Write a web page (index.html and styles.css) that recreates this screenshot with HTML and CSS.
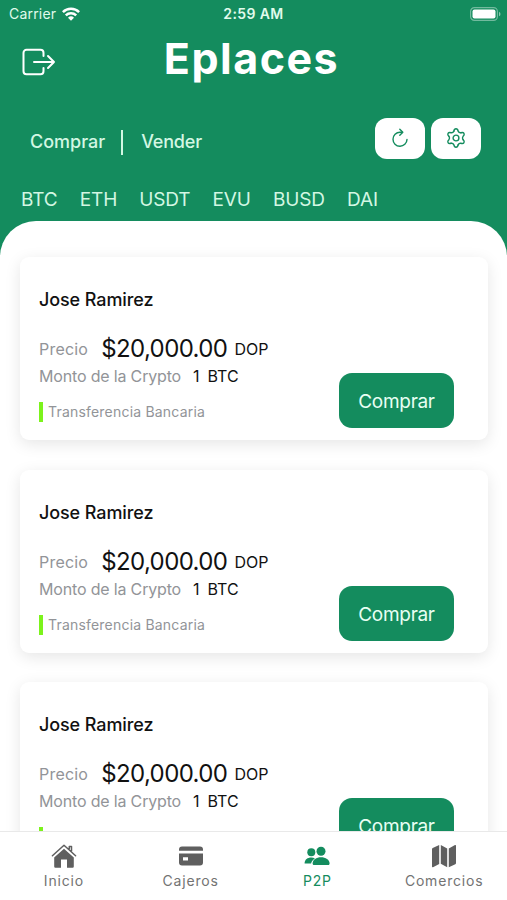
FILE: index.html
```html
<!DOCTYPE html>
<html lang="es">
<head>
  <meta charset="UTF-8" />
  <meta name="viewport" content="width=device-width, initial-scale=1.0" />
  <title>Eplaces</title>
  <link rel="stylesheet" href="styles.css">
</head>
<body>
  <div class="app">
    <!-- Status bar -->
    <div class="status-bar">
      <div class="carrier">
        <span>Carrier</span>
        <svg width="18" height="14" viewBox="0 0 18 14" fill="none" stroke="#fff" stroke-width="2.5">
          <path d="M0.9 5.2a11.5 11.5 0 0 1 16.2 0" />
          <path d="M3.8 8.3a7.4 7.4 0 0 1 10.4 0" />
          <path d="M9 13.8L6 10.8a4.3 4.3 0 0 1 6 0z" fill="#fff" stroke="none" />
        </svg>
      </div>
      <span class="time">2:59 AM</span>
      <svg class="battery" width="31" height="14" viewBox="0 0 31 14">
        <rect x="0.6" y="0.6" width="26.8" height="12.8" rx="3.8" fill="none" stroke="#fff" stroke-opacity=".4" stroke-width="1.2" />
        <rect x="2.5" y="2.4" width="23" height="9.2" rx="2" fill="#fff" />
        <path d="M29 4.7a2.5 2.5 0 0 1 0 4.6z" fill="#fff" fill-opacity=".5" />
      </svg>
    </div>

    <!-- Title -->
    <header class="header">
      <svg class="logout" width="34" height="28" viewBox="0 0 34 28" fill="none" stroke="#fff" stroke-width="2" stroke-linecap="round" stroke-linejoin="round">
        <path d="M21.500 8V4.800a3 3 0 0 0-3-3h-14a3 3 0 0 0-3 3v18.400a3 3 0 0 0 3 3h14a3 3 0 0 0 3-3V20" />
        <path d="M12 14h20M26 8l6 6-6 6" />
      </svg>
      <h1>Eplaces</h1>
    </header>

    <!-- Buy / sell switch -->
    <div class="toolbar">
      <div class="modes">
        <span class="mode-buy">Comprar</span>
        <span class="divider"></span>
        <span class="mode-sell">Vender</span>
      </div>
      <div class="actions">
        <button class="icon-button">
          <svg width="18" height="20" viewBox="0 0 18 20" fill="none" stroke="#148c5e" stroke-width="1.4" stroke-linecap="round" stroke-linejoin="round">
            <path d="M16 11.500A7 7 0 1 1 9 4.300h2.200" />
            <path d="M8.800 1.300l3 3-3 3" />
          </svg>
        </button>
        <button class="icon-button">
          <svg width="20" height="20" viewBox="0 0 20 20" fill="none" stroke="#148c5e" stroke-width="1.4" stroke-linecap="round">
            <path id="tooth" d="M7.900 3.100C8.200 1.300 8.800.8 10 .8s1.800.5 2.100 2.300q.8 1.800 2.830 1.630" />
            <use href="#tooth" transform="rotate(60 10 10)" />
            <use href="#tooth" transform="rotate(120 10 10)" />
            <use href="#tooth" transform="rotate(180 10 10)" />
            <use href="#tooth" transform="rotate(240 10 10)" />
            <use href="#tooth" transform="rotate(300 10 10)" />
            <circle cx="10" cy="10" r="2.900" />
          </svg>
        </button>
      </div>
    </div>

    <!-- Coins -->
    <nav class="coins">
      <span>BTC</span>
      <span>ETH</span>
      <span>USDT</span>
      <span>EVU</span>
      <span>BUSD</span>
      <span>DAI</span>
    </nav>

    <!-- Offers -->
    <main class="offers">
      <div class="card">
        <div class="info">
          <h2>Jose Ramirez</h2>
          <p class="price"><span class="label">Precio</span><span class="amount">$20,000.00</span><span class="currency">DOP</span></p>
          <p class="crypto"><span class="label">Monto de la Crypto</span><span class="quantity">1</span><span class="coin">BTC</span></p>
          <p class="method"><span>Transferencia Bancaria</span></p>
        </div>
        <button class="buy">Comprar</button>
      </div>
      <div class="card">
        <div class="info">
          <h2>Jose Ramirez</h2>
          <p class="price"><span class="label">Precio</span><span class="amount">$20,000.00</span><span class="currency">DOP</span></p>
          <p class="crypto"><span class="label">Monto de la Crypto</span><span class="quantity">1</span><span class="coin">BTC</span></p>
          <p class="method"><span>Transferencia Bancaria</span></p>
        </div>
        <button class="buy">Comprar</button>
      </div>
      <div class="card">
        <div class="info">
          <h2>Jose Ramirez</h2>
          <p class="price"><span class="label">Precio</span><span class="amount">$20,000.00</span><span class="currency">DOP</span></p>
          <p class="crypto"><span class="label">Monto de la Crypto</span><span class="quantity">1</span><span class="coin">BTC</span></p>
          <p class="method"></p>
        </div>
        <button class="buy">Comprar</button>
      </div>
    </main>

    <!-- Bottom tabs -->
    <nav class="tabs">
      <div class="tab">
        <svg width="26" height="26" viewBox="0 0 26 26" fill="#5f5f5f">
          <path d="M13 5.800L3.200 14.400V23.500a1.200 1.200 0 0 0 1.200 1.200H10v-8.200h6v8.200h5.600a1.200 1.200 0 0 0 1.200-1.200v-9.100z" />
          <path d="M1.400 12.800L13 2.300l11.600 10.500M20.500 8V3.400h-2.200v2.500" fill="none" stroke="#5f5f5f" stroke-width="1.500" stroke-linecap="round" stroke-linejoin="round" />
        </svg>
        <span>Inicio</span>
      </div>
      <div class="tab">
        <svg width="26" height="26" viewBox="0 0 26 26" fill="#5f5f5f">
          <path d="M1 7.800V6.600A3 3 0 0 1 4 3.600h18a3 3 0 0 1 3 3v1.200z" />
          <path fill-rule="evenodd" d="M1 10.600h24v8.800a3 3 0 0 1-3 3H4a3 3 0 0 1-3-3zM5 14.200v3.400h5v-3.400z" />
        </svg>
        <span>Cajeros</span>
      </div>
      <div class="tab active">
        <svg width="26" height="26" viewBox="0 0 26 26" fill="#148c5e">
          <circle cx="7.300" cy="9.300" r="4" />
          <path d="M0.600 20.600c0-4 3-6 6.700-6 1.500 0 2.700.3 3.600.8-2 1.100-3.400 2.900-3.800 5.200z" />
          <circle cx="17" cy="8.300" r="4.500" />
          <path d="M8.600 20.500c0-4 3.800-6.300 8.400-6.300s8.600 2.300 8.600 6.300c0 .9-.5 1.500-1.400 1.500H10c-.9 0-1.400-.6-1.400-1.500z" />
        </svg>
        <span>P2P</span>
      </div>
      <div class="tab">
        <svg width="26" height="26" viewBox="0 0 26 26" fill="#5f5f5f">
          <path d="M8.200 1.900v19L2 24.200a.7.7 0 0 1-1-.6V6.300c0-.6.2-1 .7-1.200z" />
          <path d="M9.800 1.900l6.400 3.500v18.800l-6.400-3.400z" />
          <path d="M17.800 5.400L24 2.100a.7.7 0 0 1 1 .6V20c0 .6-.2 1-.7 1.200l-6.500 3z" />
        </svg>
        <span>Comercios</span>
      </div>
    </nav>
  </div>
</body>
</html>
```
FILE: styles.css
```css
* {
  box-sizing: border-box;
}
body {
  margin: 0;
  font-family: Inter, sans-serif;
  background-color: #148c5e;
}
h1, h2, p {
  margin: 0;
}
svg {
  display: block;
}
button {
  border: none;
  padding: 0;
  font-family: inherit;
  cursor: pointer;
}
.app {
  display: flex;
  flex-direction: column;
  height: 900px;
  overflow: hidden;
  color: #fff;
}
.status-bar {
  display: grid;
  grid-template-columns: 1fr auto 1fr;
  align-items: center;
  height: 27px;
  padding: 0 6px 0 9px;
  font-size: 14px;
  color: #e0fbec;
}
.carrier {
  display: flex;
  align-items: center;
  gap: 6px;
  letter-spacing: 0.2px;
}
.time {
  margin-right: 3px;
  font-weight: 600;
  letter-spacing: 0.4px;
}
.battery {
  justify-self: end;
}
.header {
  display: grid;
  grid-template-columns: 34px 1fr 34px;
  align-items: center;
  height: 70px;
  padding: 0 26px 0 22px;
}
h1 {
  padding-bottom: 7px;
  font-size: 43px;
  font-weight: 700;
  line-height: 57px;
  text-align: center;
  letter-spacing: 1.5px;
}
.toolbar {
  display: flex;
  justify-content: space-between;
  height: 84px;
  padding: 21px 26px 0 30px;
}
.modes {
  display: flex;
  align-items: center;
  height: 46px;
  font-size: 18px;
  font-weight: 500;
  color: #d3f7e3;
}
.mode-sell {
  letter-spacing: -0.2px;
}
.divider {
  width: 2px;
  height: 25px;
  margin: 2px 18px 0 16px;
  background-color: #d3f7e3;
}
.actions {
  display: flex;
  gap: 6px;
}
.icon-button {
  display: flex;
  align-items: center;
  justify-content: center;
  width: 50px;
  height: 41px;
  padding-bottom: 1px;
  border-radius: 12px;
  background-color: #fff;
}
.coins {
  display: flex;
  gap: 22px;
  height: 40px;
  padding-left: 21px;
  font-size: 19px;
  line-height: 37px;
  letter-spacing: -0.1px;
  color: #d3f7e3;
}
.offers {
  flex: 1;
  display: flex;
  flex-direction: column;
  gap: 29.5px;
  min-height: 0;
  overflow: hidden;
  padding: 36px 19px 0 20px;
  border-radius: 36px 36px 0 0;
  background-color: #fff;
  color: #111;
}
.card {
  flex: none;
  display: flex;
  justify-content: space-between;
  height: 183px;
  padding: 0 34px 0 19px;
  border-radius: 9px;
  background-color: #fff;
  box-shadow: 0 4px 16px rgba(0, 0, 0, 0.1);
}
.card h2 {
  margin-top: 31px;
  font-size: 18px;
  font-weight: 500;
  line-height: 24px;
  letter-spacing: -0.1px;
}
.card p {
  display: flex;
  white-space: nowrap;
}
.label {
  font-size: 16px;
  color: #929498;
}
.price {
  align-items: center;
  height: 32px;
  margin-top: 21px;
  line-height: 32px;
}
.price .label {
  letter-spacing: 0.2px;
}
.amount {
  margin: 0 7px 0 13px;
  font-size: 24px;
  letter-spacing: -0.6px;
}
.currency, .quantity, .coin {
  font-size: 16px;
}
.crypto {
  margin-top: -1px;
  line-height: 24px;
}
.crypto .label {
  letter-spacing: -0.17px;
}
.quantity {
  margin: 0 8px 0 12px;
}
.method {
  height: 20px;
  margin-top: 14px;
  padding-left: 5px;
  border-left: 4px solid #7cf31c;
  font-size: 14px;
  line-height: 20px;
  letter-spacing: 0.2px;
  color: #929498;
}
.buy {
  width: 115px;
  height: 55px;
  margin-top: 116px;
  padding-top: 2px;
  border-radius: 13px;
  background-color: #148c5e;
  color: #e8fff3;
  font-size: 19px;
  letter-spacing: -0.3px;
}
.tabs {
  display: flex;
  height: 69px;
  border-top: 1px solid #e9e9e9;
  background-color: #fff;
}
.tab {
  flex: 1;
  display: flex;
  flex-direction: column;
  align-items: center;
  padding: 11px 0 0 1px;
  font-size: 14px;
  line-height: 24px;
  letter-spacing: 0.8px;
  color: #737373;
}
.tab.active {
  color: #148c5e;
}
```
